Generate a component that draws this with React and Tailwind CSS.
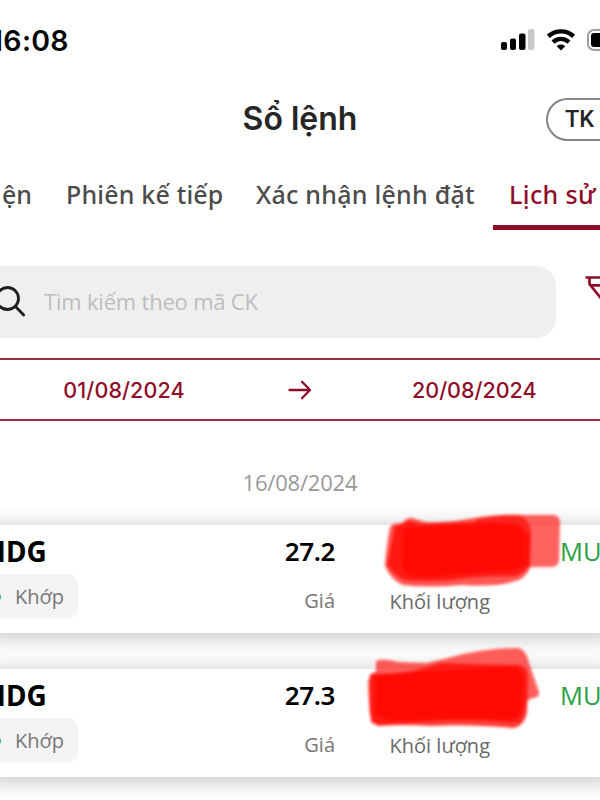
const orders = [
  { symbol: 'HDG', status: 'Khớp', price: '27.2', side: 'MUA' },
  { symbol: 'HDG', status: 'Khớp', price: '27.3', side: 'MUA' },
];

function StatusBar() {
  return (
    <header className="flex h-[80px] shrink-0 items-center justify-between">
      <div className="-ml-[9px] pt-[2px] font-['Inter',sans-serif] text-[28.5px] leading-none font-semibold tracking-[0.3px] text-[#080808]">16:08</div>
      <div className="-mr-[28px] flex items-center">
        <svg width="34" height="22" viewBox="0 0 34 22" className="mr-[12px]">
          <rect x="0" y="13" width="6" height="8" rx="2" fill="#050505" />
          <rect x="9" y="9.5" width="6" height="11.5" rx="2" fill="#050505" />
          <rect x="18" y="4.5" width="6.5" height="16.5" rx="2" fill="#050505" />
          <rect x="27" y="0" width="6.5" height="21" rx="2" fill="#c9c9c9" />
        </svg>
        <svg width="28" height="22" viewBox="0 0 28 22" className="mr-[12px]" fill="none" stroke="#050505" strokeWidth="4.4">
          <path d="M1.4 7.3C8.6 .7 19.4 .7 26.6 7.3" />
          <path d="M6 13.2C10.7 8.8 17.3 8.8 22 13.2" />
          <path d="M14 21.6L9.7 17.3C12 15 16 15 18.3 17.3Z" fill="#050505" stroke="none" />
        </svg>
        <div className="h-[22px] w-[41px] rounded-[7px] border-2 border-[#a0a0a0] p-[2px]">
          <div className="h-full w-[33px] rounded-[3px] bg-black" />
        </div>
      </div>
    </header>
  );
}

function TitleBar() {
  return (
    <div className="grid h-[78px] shrink-0 grid-cols-[1fr_116px_1fr] items-center">
      <h1 className="col-start-2 whitespace-nowrap text-center font-['Inter',sans-serif] text-[32px] leading-[40px] font-semibold tracking-[0px] text-[#252525]">Sổ lệnh</h1>
      <button className="-mr-[40px] flex h-[43px] w-[94px] items-center justify-self-end rounded-full border-2 border-[#858585] pt-[2px] pl-[17px] text-left font-['Roboto',sans-serif] text-[23.5px] font-medium text-[#252525]">TK</button>
    </div>
  );
}

function Tabs() {
  return (
    <nav className="flex h-[72px] shrink-0 font-['Noto_Sans',sans-serif] text-[25px] leading-[73px] font-medium whitespace-nowrap text-[#4c4c4c]">
      <span className="w-[66px] pl-[2px]">ện</span>
      <span className="w-[190px] tracking-[0.18px]">Phiên kế tiếp</span>
      <span className="w-[237px] tracking-[0.25px]">Xác nhận lệnh đặt</span>
      <span className="w-[107px] border-b-[5px] border-[#8f0d29] pl-[16px] tracking-[0.4px] text-[#8f0d29]">Lịch sử</span>
    </nav>
  );
}

function SearchRow() {
  return (
    <div className="mt-[36px] flex h-[72px] shrink-0 justify-between">
      <div className="-ml-[30px] flex w-[586px] items-center rounded-[20px] bg-[#efefef] pl-[25px]">
        <svg width="32" height="32" viewBox="0 0 32 32" className="shrink-0" fill="none" stroke="#1d1d1d" strokeWidth="2.8" strokeLinecap="round">
          <circle cx="12.5" cy="12.5" r="11" />
          <path d="M20.5 20.5L28.7 29" />
        </svg>
        <span className="ml-[17px] pb-[2px] font-['Open_Sans',sans-serif] text-[22px] leading-[30px] tracking-[-0.2px] text-[#bdbdbd]">Tìm kiếm theo mã CK</span>
      </div>
      <svg width="15" height="44" viewBox="0 0 15 44" className="mt-[8px] shrink-0" fill="none" stroke="#8f0d29" strokeWidth="2.7">
        <path d="M.5 3.5H32M4.5 3.5V10L19 28M4.5 11.3H30" />
      </svg>
    </div>
  );
}

function DateRange() {
  return (
    <div className="mt-[20px] grid h-[63px] shrink-0 grid-cols-[248px_104px_1fr] items-center border-y-2 border-[#992f46] font-['Inter',sans-serif] text-[21.5px] font-medium text-[#8f0d29]">
      <span className="pt-[2px] text-center tracking-[0.1px]">01/08/2024</span>
      <svg width="24" height="22" viewBox="0 0 24 22" className="justify-self-center" fill="none" stroke="#8f0d29" strokeWidth="2.3" strokeLinecap="round" strokeLinejoin="round">
        <path d="M1.5 11H22M14 2.8L22 11L14 19.2" />
      </svg>
      <span className="pt-[2px] pl-[60px]">20/08/2024</span>
    </div>
  );
}

function Scribble({ second }) {
  if (second) {
    return (
      <svg width="190" height="100" viewBox="0 0 190 100" className="absolute -top-[29px] left-[370px]">
        <g style={{ filter: 'blur(1.5px)' }} fill="#ff0a04">
          <path d="M16 21Q24 18 38 22L66 23L88 18Q122 8 157 8Q166 9 169 23L179 52Q180 57 173 58L168 60L160 82Q144 83 110 78L26 85L11 83Q8 58 8 42Q9 35 16 31Z" opacity=".66" />
          <path d="M10 34Q34 34 53 31L82 23Q128 25 159 25Q168 27 168 39L167 73Q164 86 154 88Q105 84 72 86Q42 84 18 86Q11 84 10 72Z" opacity=".8" />
          <path d="M16 36Q36 34 58 32L155 27Q164 30 163 42L161 71Q157 80 148 80L31 80Q15 78 16 70Z" />
        </g>
      </svg>
    );
  }
  return (
    <svg width="205" height="90" viewBox="0 0 205 90" className="absolute -top-[15px] left-[380px]">
      <g style={{ filter: 'blur(1.5px)' }} fill="#ff0a04">
        <path d="M105 10Q122 5 146 5L184 5Q190 6 190 13L189 51Q188 57 181 57L148 57L119 40Z" opacity=".64" />
        <path d="M23 14L33 13Q35 8 42 8L55 12Q75 13 98 9Q129 4 149 5Q158 8 161 20L160 58Q155 70 142 72Q127 77 92 75Q59 78 33 75Q21 70 15 56Q16 38 20 17Z" opacity=".69" />
        <path d="M25 16L39 11L50 14Q104 11 140 13Q157 16 160 29L159 53Q157 62 145 66Q103 66 83 70Q56 72 34 70Q24 65 17 55Z" opacity=".8" />
        <path d="M33 18Q90 15 132 14Q153 15 154 28L153 53Q151 59 139 60L86 64Q52 68 38 64Q32 61 33 53Z" />
      </g>
    </svg>
  );
}

function OrderCard({ order, second }) {
  return (
    <article className="relative -mx-[10px] grid h-[108px] shrink-0 grid-cols-[335px_155px_1fr] grid-rows-[49px_1fr] bg-white px-[10px] font-['Open_Sans',sans-serif] shadow-[0_3px_20px_2px_rgba(0,0,0,0.22)]">
      <div className="flex items-start justify-between pt-[7px] text-black">
        <strong className="-ml-[15.5px] font-['Noto_Sans',sans-serif] text-[28px] leading-[38px] font-bold">{order.symbol}</strong>
        <span className="font-['Noto_Sans',sans-serif] text-[26px] leading-[38px] font-semibold tracking-[-0.4px]">{order.price}</span>
      </div>
      <div />
      <div className="overflow-hidden pt-[7px] pl-[70px] text-[25.5px] leading-[38px] text-[#2aa049]">{order.side}</div>
      <div className="flex items-start justify-between text-[20px] text-[#777]">
        <div className="-ml-[20px] flex h-[45px] w-[98px] items-center rounded-[10px] bg-[#f4f4f4] pl-[11px]">
          <span className="mr-[14px] size-[10px] shrink-0 rounded-full bg-[#2cb66a]" />{order.status}
        </div>
        <span className="leading-[54px]">Giá</span>
      </div>
      <div className="text-right text-[20px] leading-[56px] text-[#696969]">Khối lượng</div>
      <Scribble second={second} />
    </article>
  );
}

export default function App() {
  return (
    <main className="flex h-[800px] w-[600px] flex-col overflow-hidden bg-white">
      <StatusBar />
      <TitleBar />
      <Tabs />
      <SearchRow />
      <DateRange />
      <div className="h-[104px] shrink-0 pt-[44px] text-center font-['Open_Sans',sans-serif] text-[22px] leading-[34px] tracking-[-0.2px] text-[#999]">16/08/2024</div>
      <div className="flex flex-col gap-[36px]">
        {orders.map((order, i) => <OrderCard key={order.price} order={order} second={i === 1} />)}
      </div>
    </main>
  );
}
